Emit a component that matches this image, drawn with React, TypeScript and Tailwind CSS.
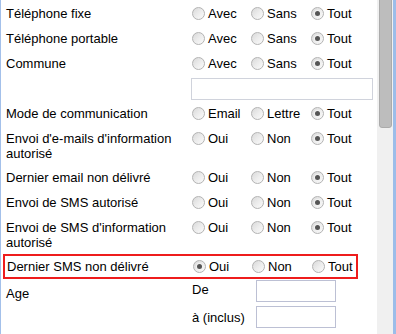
import React from "react";

type Row = {
  label: string[];
  options: string[];
  selected: number;
  highlight?: boolean;
};

const Radio = ({ checked }: { checked: boolean }) => (
  <span className="flex items-center justify-center w-[13px] h-[13px] rounded-full border border-[#b3b3b3] bg-gradient-to-br from-[#d9d9d9] via-[#ececec] to-[#fbfbfb] shrink-0">
    {checked && (
      <span className="w-[7px] h-[7px] rounded-full bg-[#f2f2f2] flex items-center justify-center">
        <span className="w-[5px] h-[5px] rounded-full bg-[#555555]" />
      </span>
    )}
  </span>
);

const Options = ({ options, selected }: { options: string[]; selected: number }) => (
  <div className="flex self-start h-[15px]">
    {options.map((o, i) => (
      <label
        key={o}
        className={`flex items-center gap-[3px] ${i === 0 ? "w-[59px]" : i === 1 ? "w-[60px]" : ""}`}
      >
        <Radio checked={i === selected} />
        <span>{o}</span>
      </label>
    ))}
  </div>
);

const FilterRow = ({ row }: { row: Row }) => {
  if (row.highlight) {
    return (
      <div className="flex items-center ml-[2px] mr-[19px] border-2 border-[#ee1c1c] py-[3px] pl-[2px]">
        <div className="w-[186px]">{row.label[0]}</div>
        <Options options={row.options} selected={row.selected} />
      </div>
    );
  }
  return (
    <div className={`flex pl-[5px] pt-[5px] ${row.label.length > 1 ? "pb-[4px]" : "pb-[5px]"}`}>
      <div className="w-[186px]">
        {row.label.map((l) => (
          <div key={l}>{l}</div>
        ))}
      </div>
      <Options options={row.options} selected={row.selected} />
    </div>
  );
};

const top: Row[] = [
  { label: ["Téléphone fixe"], options: ["Avec", "Sans", "Tout"], selected: 2 },
  { label: ["Téléphone portable"], options: ["Avec", "Sans", "Tout"], selected: 2 },
  { label: ["Commune"], options: ["Avec", "Sans", "Tout"], selected: 2 },
];

const rest: Row[] = [
  { label: ["Mode de communication"], options: ["Email", "Lettre", "Tout"], selected: 2 },
  { label: ["Envoi d'e-mails d'information", "autorisé"], options: ["Oui", "Non", "Tout"], selected: 2 },
  { label: ["Dernier email non délivré"], options: ["Oui", "Non", "Tout"], selected: 2 },
  { label: ["Envoi de SMS autorisé"], options: ["Oui", "Non", "Tout"], selected: 2 },
  { label: ["Envoi de SMS d'information", "autorisé"], options: ["Oui", "Non", "Tout"], selected: 2 },
  { label: ["Dernier SMS non délivré"], options: ["Oui", "Non", "Tout"], selected: 0, highlight: true },
];

export default function App() {
  return (
    <div
      className="flex w-[396px] h-[334px] overflow-hidden bg-white text-black text-[13px] leading-[15px] border-l border-[#a3c0ea]"
      style={{ fontFamily: '"Liberation Sans", Arial, sans-serif' }}
    >
      <div className="w-[376px] pt-[1px]">
        {top.map((r) => (
          <FilterRow key={r.label[0]} row={r} />
        ))}
        <div className="pl-[190px] pt-[2px] pb-[1px]">
          <div className="w-[182px] h-[22px] border border-[#d0d3dc] bg-white" />
        </div>
        {rest.map((r) => (
          <FilterRow key={r.label[0]} row={r} />
        ))}
        <div className="flex pl-[5px] pt-[1px]">
          <div className="w-[186px] pt-[6px]">Age</div>
          <div className="flex flex-col gap-[4px]">
            <div className="flex items-center">
              <span className="w-[64px] -mt-[4px]">De</span>
              <div className="w-[80px] h-[22px] border border-[#bcc0d4] bg-white" />
            </div>
            <div className="flex items-center">
              <span className="w-[64px]">à (inclus)</span>
              <div className="w-[80px] h-[22px] border border-[#bcc0d4] bg-white" />
            </div>
          </div>
        </div>
      </div>
      <div className="w-[16px] bg-[#f0f0f0] flex justify-center">
        <div className="w-[13px] h-[132px] -mt-[4px] bg-[#bdbdbd] border border-[#ababab] rounded-b-[3px]" />
      </div>
      <div className="w-[3px] bg-[#9cbde9]" />
    </div>
  );
}
